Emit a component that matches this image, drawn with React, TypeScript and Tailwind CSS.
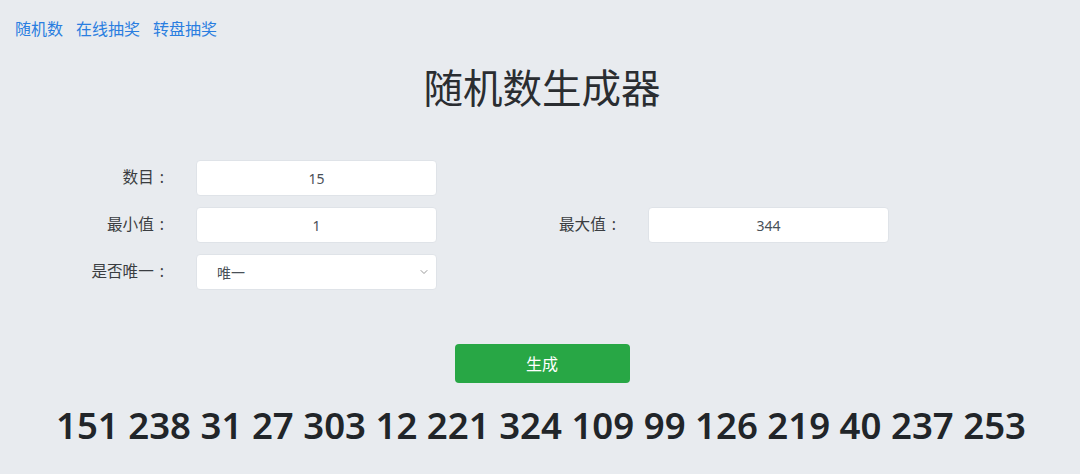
import { ChevronDown } from 'lucide-react';

const NUMS = [151, 238, 31, 27, 303, 12, 221, 324, 109, 99, 126, 219, 40, 237, 253];

const font = "font-['Noto_Sans','Noto_Sans_CJK_SC',sans-serif]";

function Field({ value }: { value: string }) {
  return (
    <div className="w-[241px] h-9 bg-white border border-[#dfe3e8] rounded flex items-center justify-center text-[14px] text-[#495057]">
      {value}
    </div>
  );
}

function Label({ text, w }: { text: string; w: string }) {
  return (
    <span className={`${w} text-right`}>
      {text}
      <span className="ml-[6px]">:</span>
    </span>
  );
}

export default function App() {
  return (
    <div className={`w-[1080px] h-[474px] bg-[#e8ebef] overflow-hidden ${font}`}>
      <nav className="flex gap-[13px] pl-[15px] pt-[17px] text-[16px] leading-6 text-[#2a7ee0]">
        <a>随机数</a>
        <a>在线抽奖</a>
        <a>转盘抽奖</a>
      </nav>

      <h1 className="mt-[23px] pl-[4px] text-center text-[39.5px] leading-[48px] text-[#2a2d31]">随机数生成器</h1>

      <div className="mt-[48px] flex flex-col gap-[11px] text-[15.6px] text-[#3a3d41]">
        <div className="flex items-center">
          <Label text="数目" w="w-[164px]" />
          <div className="ml-[32px]"><Field value="15" /></div>
        </div>
        <div className="flex items-center">
          <Label text="最小值" w="w-[164px]" />
          <div className="ml-[32px]"><Field value="1" /></div>
          <Label text="最大值" w="w-[179px]" />
          <div className="ml-[32px]"><Field value="344" /></div>
        </div>
        <div className="flex items-center">
          <Label text="是否唯一" w="w-[164px]" />
          <div className="ml-[32px] w-[241px] h-9 bg-white border border-[#dfe3e8] rounded flex items-center justify-between pl-[20px] pr-[6px] text-[14px] text-[#495057]">
            <span>唯一</span>
            <ChevronDown size={12} strokeWidth={1.5} className="text-[#777]" />
          </div>
        </div>
      </div>

      <div className="mt-[54px] pl-[4px] flex justify-center">
        <button className="w-[175px] h-[39px] bg-[#28a745] rounded text-white text-[16px]">生成</button>
      </div>

      <p className="mt-[18px] pl-[2px] text-center text-[36.6px] leading-[48px] font-semibold text-[#212529]">
        {NUMS.join(' ')}
      </p>
    </div>
  );
}
